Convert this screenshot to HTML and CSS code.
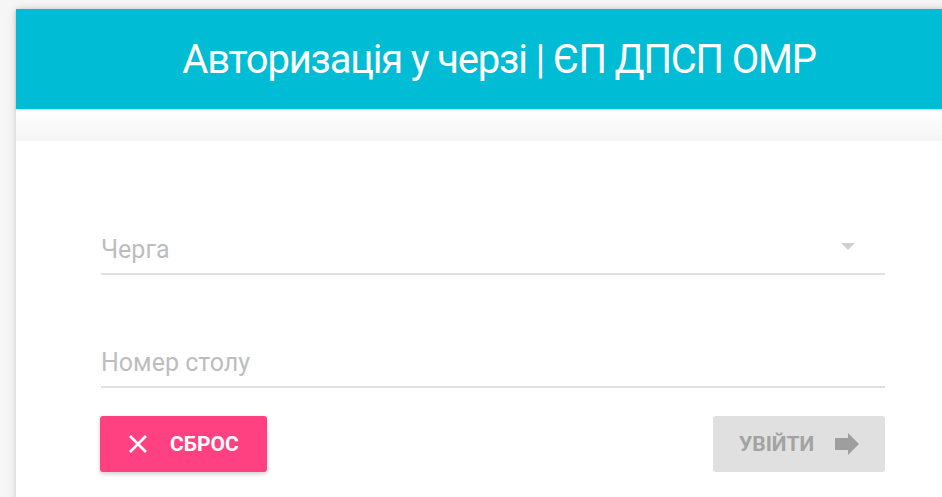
FILE: index.html
```html
<!DOCTYPE html>
<html lang="uk">
<head>
<meta charset="utf-8">
<title>Авторизація у черзі</title>
<link rel="stylesheet" href="styles.css">
</head>
<body>
<div class="card">
  <header class="card-header">
    <h1 class="title">Авторизація у черзі | ЄП ДПСП ОМР</h1>
  </header>
  <div class="header-fade"></div>
  <form class="form">
    <div class="field field-select">
      <span class="placeholder">Черга</span>
      <span class="caret"></span>
    </div>
    <div class="field">
      <span class="placeholder">Номер столу</span>
    </div>
    <div class="actions">
      <button type="button" class="btn btn-reset">
        <svg class="btn-icon" width="20" height="20" viewBox="0 0 20 20"><path d="M2 2L18 18M18 2L2 18" stroke="#fff" stroke-width="2.6" fill="none"/></svg>
        <span>СБРОС</span>
      </button>
      <button type="button" class="btn btn-login" disabled>
        <span>УВІЙТИ</span>
        <svg class="btn-icon" width="24" height="22" viewBox="0 0 24 22"><path d="M0 5H13V0L24 11L13 22V17H0Z" fill="#9e9e9e"/></svg>
      </button>
    </div>
  </form>
</div>
</body>
</html>
```
FILE: styles.css
```css
html, body {
  margin: 0;
  padding: 0;
}

body {
  background: #f6f6f6;
  font-family: Roboto, "Noto Sans", Arial, sans-serif;
  overflow: hidden;
  height: 497px;
}

.card {
  margin: 9px 0 0 16px;
  width: 966px;
  height: 520px;
  background: #fff;
  box-shadow: 0 0 6px rgba(0, 0, 0, 0.14), 0 0 14px rgba(0, 0, 0, 0.06);
}

.card-header {
  height: 100px;
  background: #00bcd4;
  display: flex;
  align-items: center;
  justify-content: center;
  box-shadow: 0 1px 2px rgba(0, 0, 0, 0.2);
  position: relative;
}

.title {
  margin: 0;
  color: #fff;
  font-weight: 400;
  font-size: 40px;
  letter-spacing: -1.2px;
}

.header-fade {
  height: 32px;
  background: linear-gradient(#ffffff 0%, #fbfbfb 40%, #f4f4f4 100%);
}

.form {
  padding: 0 97px 0 85px;
  display: flex;
  flex-direction: column;
}

.field {
  height: 46px;
  border-bottom: 2px solid #e0e0e0;
  display: flex;
  align-items: flex-end;
  justify-content: space-between;
  padding-bottom: 8px;
  box-sizing: border-box;
}

.field-select {
  margin-top: 88px;
}

.field + .field {
  margin-top: 67px;
}

.placeholder {
  color: #bdbdbd;
  font-size: 25px;
  line-height: 30px;
}

.caret {
  width: 0;
  height: 0;
  border-left: 7px solid transparent;
  border-right: 7px solid transparent;
  border-top: 7px solid #d0d0d0;
  margin: 0 30px 15px 0;
}

.actions {
  margin-top: 28px;
  display: flex;
  justify-content: space-between;
}

.btn {
  height: 56px;
  border: none;
  border-radius: 3px;
  display: flex;
  align-items: center;
  font-family: Roboto, Arial, sans-serif;
  font-weight: 700;
  font-size: 21px;
  padding: 0;
  gap: 22px;
}

.btn-reset {
  width: 167px;
  margin-left: -1px;
  background: #ff4081;
  color: #fff;
  padding-left: 28px;
  box-shadow: 0 2px 4px rgba(0, 0, 0, 0.2);
}

.btn-login {
  width: 172px;
  background: #e0e0e0;
  color: #a3a3a3;
  padding-left: 26px;
  gap: 21px;
}
```
